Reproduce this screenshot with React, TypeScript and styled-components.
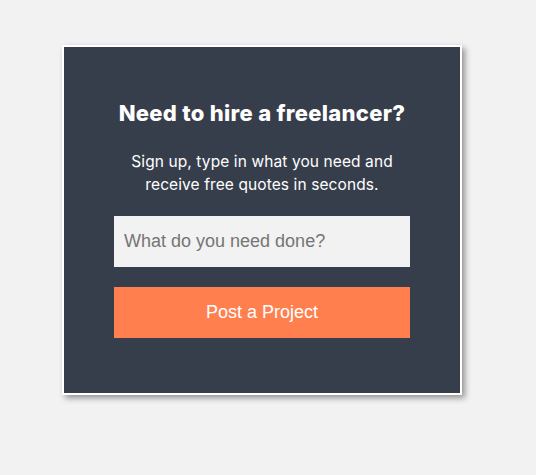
import React from "react";
import styled, { createGlobalStyle } from "styled-components";

const Global = createGlobalStyle`
  html, body { margin: 0; padding: 0; background: #f2f2f2; }
  * { box-sizing: border-box; }
`;

const Page = styled.div`
  padding: 45px 0 0 62px;
  min-height: 475px;
`;

const Card = styled.div`
  width: 400px;
  height: 350px;
  border: 2px solid #ffffff;
  background: #373e4b;
  box-shadow: 3px 3px 6px rgba(0, 0, 0, 0.4);
  padding: 52px 50px 0;
  display: flex;
  flex-direction: column;
  align-items: stretch;
`;

const Title = styled.h2`
  margin: 0;
  font-family: "Inter", "Open Sans", sans-serif;
  font-weight: 800;
  font-size: 22px;
  line-height: 28px;
  color: #ffffff;
  text-align: center;
  letter-spacing: 0.3px;
  white-space: nowrap;
`;

const Subtitle = styled.p`
  margin: 23px 0 0;
  font-family: "Inter", "Open Sans", sans-serif;
  font-weight: 400;
  font-size: 15.5px;
  line-height: 23px;
  color: #ffffff;
  text-align: center;
  letter-spacing: 0.1px;
  white-space: nowrap;
`;

const Input = styled.input`
  margin-top: 20px;
  height: 51px;
  width: 100%;
  border: none;
  outline: none;
  background: #f2f2f2;
  padding: 0 10px;
  font-family: "Liberation Sans", Arial, sans-serif;
  font-size: 18px;
  color: #333;
  &::placeholder { color: #757575; }
`;

const Button = styled.button`
  margin-top: 20px;
  height: 51px;
  width: 100%;
  border: none;
  background: #ff7f4f;
  color: #ffffff;
  font-family: "Liberation Sans", Arial, sans-serif;
  font-size: 18px;
  cursor: pointer;
`;

export default function App() {
  return (
    <Page>
      <Global />
      <Card>
        <Title>Need to hire a freelancer?</Title>
        <Subtitle>
          Sign up, type in what you need and
          <br />
          receive free quotes in seconds.
        </Subtitle>
        <Input placeholder="What do you need done?" />
        <Button>Post a Project</Button>
      </Card>
    </Page>
  );
}
